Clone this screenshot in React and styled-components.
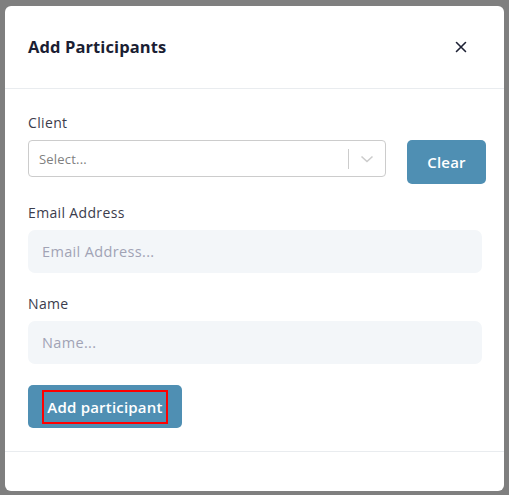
import React from "react";
import styled, { createGlobalStyle } from "styled-components";

const GlobalStyle = createGlobalStyle`
  html, body {
    margin: 0;
    padding: 0;
    background: #7f7f7f;
    font-family: "Open Sans", "Liberation Sans", sans-serif;
  }
`;

const Backdrop = styled.div`
  width: 509px;
  height: 495px;
  background: #7f7f7f;
  padding: 6px 5px 0 5px;
  box-sizing: border-box;
`;

const Modal = styled.div`
  width: 499px;
  height: 485px;
  background: #fff;
  border-radius: 6px;
  display: flex;
  flex-direction: column;
  overflow: hidden;
`;

const Header = styled.div`
  height: 83px;
  display: flex;
  align-items: center;
  justify-content: space-between;
  padding: 0 37px 1px 23px;
  border-bottom: 1px solid #e9ecef;
  box-sizing: border-box;
`;

const Title = styled.h2`
  margin: 0;
  font-size: 16.5px;
  font-weight: 700;
  color: #1b1e33;
  letter-spacing: 0.1px;
`;

const CloseButton = styled.button`
  border: none;
  background: none;
  padding: 0;
  width: 12px;
  height: 12px;
  display: flex;
  cursor: pointer;
`;

const Body = styled.div`
  padding: 24px 22px 23px 23px;
  border-bottom: 1px solid #e9ecef;
`;

const Field = styled.div`
  margin-bottom: ${(p) => p.gap || 0}px;
`;

const Label = styled.label`
  display: block;
  font-size: 14px;
  letter-spacing: 0.35px;
  font-weight: 500;
  color: #3b3c4c;
  line-height: 20px;
  margin-bottom: 7px;
`;

const Row = styled.div`
  display: flex;
  align-items: flex-start;
  gap: 21px;
  width: calc(100% + 4px);
`;

const Select = styled.div`
  flex: 1;
  height: 37px;
  border: 1px solid #cccccc;
  border-radius: 4px;
  box-sizing: border-box;
  display: flex;
  align-items: center;
`;

const SelectValue = styled.span`
  flex: 1;
  padding-left: 10px;
  font-size: 13px;
  letter-spacing: 0.2px;
  color: #808080;
`;

const Separator = styled.span`
  width: 1px;
  height: 20px;
  background: #cccccc;
`;

const Indicator = styled.span`
  width: 36px;
  display: flex;
  justify-content: center;
  align-items: center;
`;

const Button = styled.button`
  border: none;
  border-radius: 5px;
  background: #4f8fb3;
  color: #fff;
  font-family: inherit;
  font-size: 15px;
  letter-spacing: 0.2px;
  font-weight: 600;
  height: ${(p) => p.h}px;
  width: ${(p) => p.w}px;
  padding: 0;
  display: flex;
  align-items: center;
  justify-content: center;
  cursor: pointer;
`;

const FocusText = styled.span`
  outline: 2px solid #ff0000;
  padding: 5px 3px;
  line-height: 20px;
`;

const Input = styled.input`
  width: 100%;
  height: 43px;
  box-sizing: border-box;
  border: none;
  border-radius: 7px;
  background: #f3f6f9;
  padding: 0 14px;
  font-family: inherit;
  font-size: 14.5px;
  letter-spacing: 0.35px;
  color: #333;
  outline: none;
  &::placeholder {
    color: #a1a3b5;
  }
`;

const Footer = styled.div`
  flex: 1;
`;

const App = () => {
  return (
    <>
      <GlobalStyle />
      <Backdrop>
        <Modal>
          <Header>
            <Title>Add Participants</Title>
            <CloseButton aria-label="Close">
              <svg width="12" height="12" viewBox="0 0 12 12">
                <path d="M1.5 1.5 L10.5 10.5 M10.5 1.5 L1.5 10.5" stroke="#1e2235" strokeWidth="1.6" strokeLinecap="round" />
              </svg>
            </CloseButton>
          </Header>
          <Body>
            <Field gap={19}>
              <Label>Client</Label>
              <Row>
                <Select>
                  <SelectValue>Select...</SelectValue>
                  <Separator />
                  <Indicator>
                    <svg width="14" height="8" viewBox="0 0 14 8">
                      <path d="M1.5 1.5 L7 6.5 L12.5 1.5" stroke="#cccccc" strokeWidth="1.6" fill="none" />
                    </svg>
                  </Indicator>
                </Select>
                <Button w={79} h={44}>Clear</Button>
              </Row>
            </Field>
            <Field gap={21}>
              <Label>Email Address</Label>
              <Input placeholder="Email Address..." />
            </Field>
            <Field gap={21}>
              <Label>Name</Label>
              <Input placeholder="Name..." />
            </Field>
            <Button w={154} h={43}>
              <FocusText>Add participant</FocusText>
            </Button>
          </Body>
          <Footer />
        </Modal>
      </Backdrop>
    </>
  );
};

export default App;
